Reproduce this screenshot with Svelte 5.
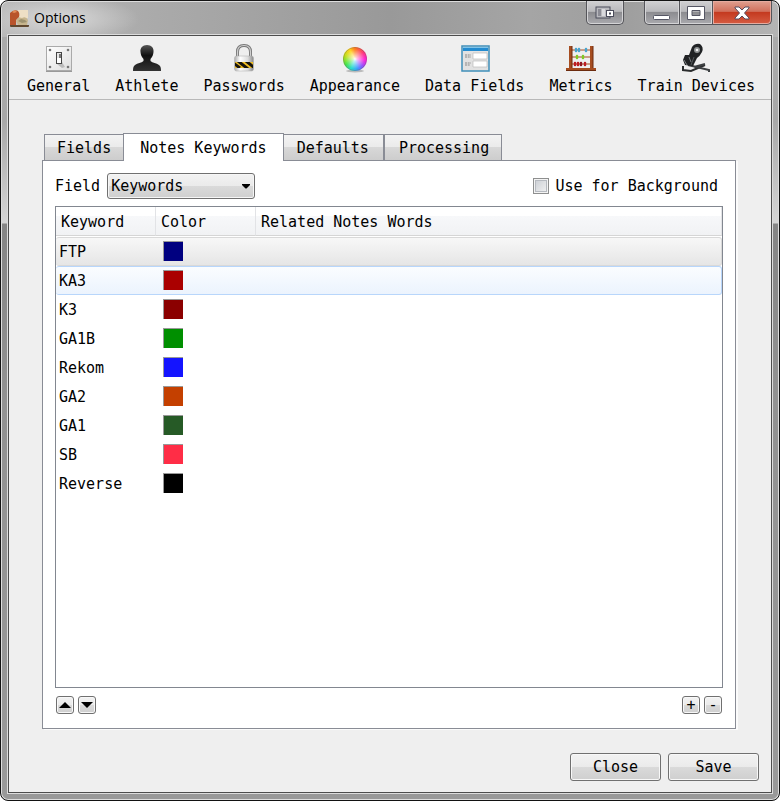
<script>
  const sections = ['General', 'Athlete', 'Passwords', 'Appearance', 'Data Fields', 'Metrics', 'Train Devices'];
  const tabs = ['Fields', 'Notes Keywords', 'Defaults', 'Processing'];
  const keywords = [
    { name: 'FTP', color: '#000080' },
    { name: 'KA3', color: '#aa0000' },
    { name: 'K3', color: '#8b0000' },
    { name: 'GA1B', color: '#008f00' },
    { name: 'Rekom', color: '#1414ff' },
    { name: 'GA2', color: '#c44000' },
    { name: 'GA1', color: '#265a26' },
    { name: 'SB', color: '#ff2d46' },
    { name: 'Reverse', color: '#000000' }
  ];
  let activeTab = $state('Notes Keywords');
  let selected = $state('FTP');
  let current = $state('KA3');
</script>

<div class="window">
  <header class="titlebar">
    <svg class="app-icon" width="19" height="18" viewBox="0 0 19 18" aria-hidden="true">
      <defs>
        <linearGradient id="app" x1="0" y1="0" x2="1" y2="1">
          <stop offset="0" stop-color="#a94d28" /><stop offset="1" stop-color="#77705c" />
        </linearGradient>
      </defs>
      <rect width="19" height="18" rx="1" fill="url(#app)" />
      <path d="M8 1H18V9Q14 10 10 9L6 4Z" fill="#eedfc5" />
      <path d="M0 4Q4 0 8 2Q10 4 9 8L6 11V16H0Z" fill="#b8532b" />
      <path d="M2 3L5 1 7 3 4 4Z" fill="#e28c59" />
      <path d="M6 12Q8 7 12 9Q16 7 18 11L17 16H8Z" fill="#c7b58d" />
      <path d="M8 12L11 10 15 11 17 13 12 14Z" fill="#9d9270" />
      <path d="M0 16h19v1q0 1-1 1H1q-1 0-1-1z" fill="#60482f" />
    </svg>
    <h1>Options</h1>
    <div class="caption">
      <button class="glass device" aria-label="Send to display">
        <svg width="20" height="14" viewBox="0 0 20 14"><rect x="1" y="1" width="14" height="11" fill="#b9b9be" stroke="#4b4c5b" /><path d="M3 3h3v7H3z" fill="#8b8b94" /><path d="M7 3h3v7H7z" fill="#d9d9dd" /><rect x="11.500" y="4.500" width="7" height="6" fill="#fff" stroke="#4b4c5b" /><rect x="14" y="6.500" width="2" height="2" fill="#4b4c5b" /></svg>
      </button>
      <div class="group">
        <button class="glass minimize" aria-label="Minimize">
          <svg width="18" height="14" viewBox="0 0 18 14"><rect x=".5" y="9.500" width="16" height="4" rx="1" fill="#fff" stroke="#555664" /></svg>
        </button>
        <button class="glass maximize" aria-label="Maximize">
          <svg width="18" height="14" viewBox="0 0 18 14"><path fill-rule="evenodd" d="M.5.500h17v13H.5zM5 4.500v5h8v-5z" fill="#fff" stroke="#555664" /></svg>
        </button>
        <button class="glass exit" aria-label="Close window">
          <svg width="16" height="14" viewBox="0 0 16 14"><path d="M1 1h4l3 3 3-3h4v1L10.500 7l4.500 5v1h-4L8 10l-3 3H1v-1l4.500-5L1 2z" fill="#fff" stroke="#564b5c" /></svg>
        </button>
      </div>
    </div>
  </header>

  <main>
    <nav>
      {#each sections as section}
        <button class="section">
          {#if section === 'General'}
            <svg width="30" height="30" viewBox="0 0 30 30"><defs><linearGradient id="plate" x2="1" y2="1"><stop stop-color="#fff" /><stop offset="1" stop-color="#dedede" /></linearGradient></defs><rect x="2.500" y="3.500" width="25" height="24" fill="url(#plate)" stroke="#aaa" /><path d="M2 28.500h26" stroke="#999" /><path d="M13 21l5 4 3-1-3-5z" fill="#bbb" /><rect x="12.500" y="9.500" width="5" height="11" fill="#e8e8e8" stroke="#444" /><path d="M15 11h2v5h-2z" fill="#777" /><path d="M13 15h4v5h-4z" fill="#fff" /><g fill="#777"><circle cx="6" cy="7" r="1.300" /><circle cx="24" cy="7" r="1.300" /><circle cx="6" cy="24" r="1.300" /><circle cx="24" cy="24" r="1.300" /></g></svg>
          {:else if section === 'Athlete'}
            <svg width="30" height="30" viewBox="0 0 30 30"><defs><linearGradient id="person" x2="0" y2="1"><stop stop-color="#555" /><stop offset=".4" stop-color="#111" /><stop offset="1" stop-color="#333" /></linearGradient></defs><path d="M15 2c-4.500 0-7 3-6.500 7 .2 3 1.300 5 3 7v2c-2 2-6 2-8.500 4-2 1.500-2 4-2 6h28c0-2 0-4.500-2-6-2.500-2-6.500-2-8.500-4v-2c1.700-2 2.800-4 3-7 .5-4-2-7-6.500-7z" fill="url(#person)" /></svg>
          {:else if section === 'Passwords'}
            <svg width="30" height="30" viewBox="0 0 30 30"><defs><linearGradient id="metal" x2="1"><stop stop-color="#aaa" /><stop offset=".3" stop-color="#fff" /><stop offset=".7" stop-color="#ddd" /><stop offset="1" stop-color="#888" /></linearGradient><clipPath id="band"><rect x="6" y="19" width="18" height="6" /></clipPath></defs><path d="M8.500 14V9q0-6.500 6.500-6.500t6.500 6.500v5" fill="none" stroke="#777" stroke-width="3" /><path d="M8.500 14V9q0-6.500 6.500-6.500t6.500 6.500v5" fill="none" stroke="#d0d0d0" stroke-width="1.200" /><rect x="5.500" y="13" width="19" height="15" rx="2" fill="url(#metal)" stroke="#aaa" stroke-width=".5" /><g clip-path="url(#band)"><path d="M6 19h18v6H6z" fill="#efbd25" /><path d="M3 19l8 6M9 18l10 8M17 18l10 8" stroke="#17140d" stroke-width="3" /></g></svg>
          {:else if section === 'Appearance'}
            <svg width="30" height="30" viewBox="0 0 30 30"><defs><radialGradient id="white"><stop stop-color="#fff" /><stop offset=".2" stop-color="#fff" stop-opacity=".7" /><stop offset=".9" stop-color="#fff" stop-opacity="0" /></radialGradient></defs><ellipse cx="15" cy="28" rx="9" ry="1.500" fill="#bbb" /><foreignObject x="3" y="4" width="24" height="24"><div class="wheel"></div></foreignObject><circle cx="15" cy="16" r="11" fill="url(#white)" /><circle cx="15" cy="16" r="11.500" fill="none" stroke="#655" stroke-opacity=".35" /></svg>
          {:else if section === 'Data Fields'}
            <svg width="30" height="30" viewBox="0 0 30 30"><rect x="2" y="3" width="27" height="25" fill="#e2e2e2" stroke="#3f8fb9" stroke-width="1.500" /><path d="M3 4h25v4H3z" fill="#238bd0" /><path d="M3 4h25v1H3z" fill="#7fc4e9" /><path d="M13 10h14v6H13zM13 18h14v6H13z" fill="#fff" stroke="#bbb" stroke-width=".7" /><path d="M5 12h6M5 14h6M5 20h6M5 22h5" stroke="#888" stroke-dasharray="2 .7" /></svg>
          {:else if section === 'Metrics'}
            <svg width="30" height="30" viewBox="0 0 30 30"><path d="M5 7h20M5 14h20M5 21h20" stroke="#a64d20" /><path d="M3 3h3v23H3zM24 3h3v23h-3zM0 25h30v3H0z" fill="#a64d20" /><path d="M6 3v22M27 3v22M0 27.500h30" stroke="#6c2b0e" /><g stroke-width="2.500" stroke-linecap="round"><path d="M10 6v2M13 6v2M20 6v2" stroke="#4aa5ce" /><path d="M11 13v2M17 13v2" stroke="#81ca24" /><path d="M9 20v2M12 20v2M19 20v2" stroke="#bd1c22" /><path d="M15 20v2" stroke="#8f1520" /></g></svg>
          {:else}
            <svg width="30" height="30" viewBox="0 0 30 30"><path d="M2 23v4l8 1 14-6" fill="none" stroke="#2b2d2e" stroke-width="2" /><path d="M7 22l21 5v2M24 21l-11 3" fill="none" stroke="#3c3f41" stroke-width="2" /><path d="M11 4q3-4 8-3 4 3 2 8-2 4-5 6l-4 8-8-1-2-5 2-5 4 0Z" fill="#202224" /><circle cx="16" cy="7" r="3" fill="#8d9192" /><circle cx="16" cy="7" r="1.300" fill="#f1f1f1" /><path d="M8 14l2 5M3 17l3 5" stroke="#787c7e" /><path d="M13 14l-3 8" stroke="#555a5c" /></svg>
          {/if}
          <span>{section}</span>
        </button>
      {/each}
    </nav>

    <div class="content">
      <div class="tabs" role="tablist">
        {#each tabs as tab}
          <button role="tab" class="tab" class:active={activeTab === tab} aria-selected={activeTab === tab} onclick={() => (activeTab = tab)}>{tab}</button>
        {/each}
      </div>
      <section class="panel">
        <div class="options">
          <label for="field">Field</label>
          <div class="combo">
            <select id="field"><option>Keywords</option></select>
            <svg width="9" height="5" viewBox="0 0 9 5" aria-hidden="true"><path d="M0 0h8v1L4.500 4.500h-1L0 1z" /></svg>
          </div>
          <label class="check"><input type="checkbox" /><span>Use for Background</span></label>
        </div>
        <div class="list">
          <table>
            <colgroup><col class="narrow" /><col class="narrow" /><col /></colgroup>
            <thead><tr><th>Keyword</th><th>Color</th><th>Related Notes Words</th></tr></thead>
            <tbody>
              {#each keywords as k}
                <tr class:selected={selected === k.name} class:current={current === k.name} onclick={() => (selected = k.name)}>
                  <td>{k.name}</td>
                  <td><button class="swatch" style:background={k.color} aria-label={`Color of ${k.name}`}></button></td>
                  <td></td>
                </tr>
              {/each}
            </tbody>
          </table>
        </div>
        <div class="tools">
          <button class="push small" aria-label="Move up"><svg width="12" height="6" viewBox="0 0 12 6"><path d="M0 6L6 0l6 6z" /></svg></button>
          <button class="push small" aria-label="Move down"><svg width="12" height="6" viewBox="0 0 12 6"><path d="M0 0h12L6 6z" /></svg></button>
          <span class="spacer"></span>
          <button class="push small">+</button>
          <button class="push small">-</button>
        </div>
      </section>
    </div>

    <footer>
      <button class="push">Close</button>
      <button class="push">Save</button>
    </footer>
  </main>
</div>

<style>
  :global(body) { margin: 0; background: #fff; }
  .window, .window * { box-sizing: border-box; }
  .window {
    min-height: 100vh;
    display: flex;
    flex-direction: column;
    padding: 0 6px 6px;
    border: 1px solid #121212;
    border-radius: 8px;
    background:
      radial-gradient(ellipse 80px 24px at 58px 18px, #d2d2d2 20%, transparent),
      linear-gradient(90deg, #b8b8b8, #aaa 20%, #999 50%, #a5a5a5 68%, #9e9e9e 80%, #b4b4b4) 0 0 / 100% 36px no-repeat,
      linear-gradient(#aaa 36px, #a8a8a8 120px, #d5d5d5 222px, #858585 223px, #929292 400px, #999);
    box-shadow: inset 0 0 0 1px #ddd;
    font: 15px/18px "DejaVu Sans Mono", monospace;
    color: #000;
  }
  button, select { font: inherit; color: inherit; margin: 0; }
  svg { display: block; flex: none; }
  .titlebar { display: flex; height: 33px; padding: 0 1px 0 3px; align-items: center; }
  h1 { margin: 0 0 0 5px; font: 14px/20px "Open Sans", "Noto Sans", sans-serif; }
  .caption { display: flex; gap: 20px; align-self: flex-start; margin-left: auto; }
  .group { display: flex; }
  .glass {
    display: flex; align-items: center; justify-content: center;
    height: 24px; padding: 0;
    border: 1px solid #55555a; border-top: 0;
    background: linear-gradient(#d0d0d2, #b9b9bc 45%, #8c8c90 50%, #aaaaae);
    box-shadow: inset 0 0 0 1px #d4d4d6;
  }
  .device { width: 38px; border-radius: 0 0 5px 5px; }
  .minimize { width: 36px; border-radius: 0 0 0 5px; }
  .maximize { width: 33px; border-left: 0; }
  .exit { width: 59px; border-left: 0; border-radius: 0 0 5px; background: linear-gradient(#e0a090, #d1705c 45%, #c43a20 50%, #d65c42); box-shadow: inset 0 0 0 1px #e6ab9f; }

  main {
    flex: 1; display: flex; flex-direction: column;
    background: #efefef; border: 1px solid #4d4d4d;
    outline: 1px solid #dcdcdc; margin: 1px;
  }
  nav { display: flex; gap: 25px; padding: 7px 18px 0; height: 64px; border-bottom: 1px solid #b8b8b8; }
  .section { display: flex; flex-direction: column; align-items: center; gap: 4px; padding: 0; border: 0; background: none; white-space: nowrap; }
  .wheel {
    width: 24px; height: 24px; border-radius: 50%;
    background: conic-gradient(#ff7a1c, #ff3b78 50deg, #ff20dc 95deg, #8d55ff 135deg, #3c9cff 165deg, #27dcd0 200deg, #48e648 240deg, #bde018 285deg, #ffd51c 330deg, #ff7a1c);
  }

  .content { flex: 1; display: flex; flex-direction: column; padding: 33px 35px 0 33px; }
  .tabs { display: flex; align-items: flex-end; padding-left: 2px; }
  .tab {
    height: 26px; padding: 1px 13px 0 12px; border: solid #898c95; border-width: 1px 0 0 1px;
    background: linear-gradient(#f3f3f3, #ebebeb 48%, #d8d8d8 50%, #cdcdcd);
    white-space: nowrap;
  }
  .tab.active { height: 28px; padding: 0 16px; margin: 0 0 -1px -1px; border-right-width: 1px; background: #fff; position: relative; }
  .tab.active + .tab { border-left-width: 0; padding: 1px 14px 0 13px; border-right-width: 1px; }
  .tab:last-child { border-right-width: 1px; padding: 1px 12px 0 14px; }
  .panel {
    flex: 1; display: flex; flex-direction: column; padding: 12px 12px 14px;
    border: 1px solid #898c95; background: #fff; box-shadow: 2px 1px 0 #fbfbfb;
  }
  .options { display: flex; align-items: center; }
  .combo { position: relative; margin-left: 7px; }
  select {
    display: block; appearance: none; width: 148px; height: 26px; padding: 0 20px 0 3px;
    border: 1px solid #707070; border-radius: 3px;
    background: linear-gradient(#f2f2f2, #ebebeb 48%, #dadada 50%, #cfcfcf); box-shadow: inset 0 0 0 1px #f6f6f6;
  }
  .combo svg { position: absolute; right: 4px; top: 11px; pointer-events: none; }
  .check { display: flex; align-items: center; gap: 6px; margin-left: auto; padding-right: 5px; }
  .check input {
    appearance: none; width: 16px; height: 16px; margin: 0;
    border: 1px solid #8e8f8f; background: linear-gradient(135deg, #c8ccd2, #f4f4f4); background-clip: content-box; padding: 2px;
    box-shadow: inset 0 0 0 1px #f4f4f4, inset 0 0 0 2px #b6bac0;
  }
  .list { flex: 1; margin-top: 7px; border: 1px solid #828790; }
  table { width: 100%; table-layout: fixed; border-collapse: separate; border-spacing: 0; }
  .narrow { width: 100px; }
  th {
    height: 29px; padding: 2px 5px 0; text-align: left; font-weight: 400;
    border-right: 1px solid #e2e3e6; border-bottom: 1px solid #d5d5d5;
    background: linear-gradient(#fff 9px, #f7f8fa 9px, #f1f2f4);
  }
  thead::after { content: ""; display: block; height: 1px; }
  td { height: 29px; padding: 0 3px; border: solid transparent; border-width: 1px 0; }
  td:nth-child(2) { padding: 0 7px 2px; }
  td:first-child { border-left-width: 0; border-radius: 3px 0 0 3px; }
  td:last-child { border-right-width: 1px; border-radius: 0 3px 3px 0; }
  .selected td { background: linear-gradient(#f8f8f8, #e5e5e5); background-origin: border-box; border-color: #d9d9d9; }
  .current td { background: linear-gradient(#fbfdff, #ebf3fd); background-origin: border-box; border-color: #b8d6fb; }
  .swatch { display: block; width: 20px; height: 20px; padding: 0; border: solid #999; border-width: 1px 0 0 1px; }
  .tools { display: flex; gap: 4px; padding: 8px 1px 0; }
  .spacer { flex: 1; }
  .push {
    display: flex; align-items: center; justify-content: center;
    width: 91px; height: 28px; padding: 0;
    border: 1px solid #707070; border-radius: 3px;
    background: linear-gradient(#f2f2f2, #ebebeb 48%, #dadada 50%, #cfcfcf); box-shadow: inset 0 0 0 1px #f8f8f8;
  }
  .small { width: 18px; height: 18px; }
  footer { display: flex; justify-content: flex-end; gap: 7px; padding: 24px 12px 11px; }
</style>
